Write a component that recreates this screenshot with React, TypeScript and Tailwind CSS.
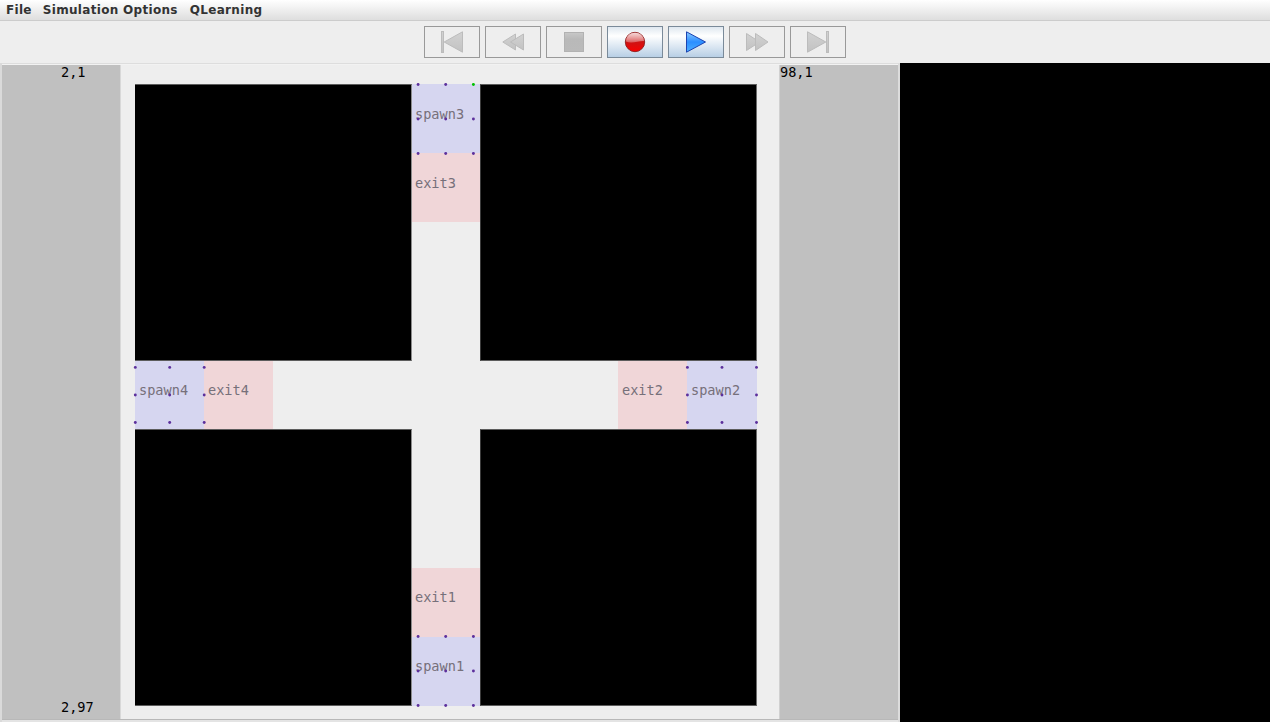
import React from 'react';

type Kind = 'start' | 'rewind' | 'stop' | 'record' | 'play' | 'forward' | 'end';
const kinds: Kind[] = ['start', 'rewind', 'stop', 'record', 'play', 'forward', 'end'];

function Icon({ kind }: { kind: Kind }) {
  const gray = { fill: 'url(#gray)', stroke: '#bcbcbc', strokeWidth: 1 };
  return (
    <svg width="54" height="30" viewBox="0 0 54 30" className="block">
      {kind === 'start' && (
        <g {...gray}>
          <rect x="16.500" y="4.500" width="2" height="21" />
          <path d="M37.500 4.800V25.200L19.200 15Z" />
        </g>
      )}
      {kind === 'rewind' && (
        <g {...gray}>
          <path d="M29.500 7V23L16.800 15Z" />
          <path d="M37.500 7V23L24.500 15Z" />
        </g>
      )}
      {kind === 'stop' && <rect x="17.500" y="5.500" width="19" height="19" fill="url(#stop)" stroke="#b2b2b2" />}
      {kind === 'record' && (
        <g>
          <circle cx="27" cy="15" r="9.700" fill="url(#red)" stroke="#8c1c1c" strokeWidth="0.900" />
          <path d="M18 14.500C18.200 9 22 5.800 27 5.800s8.800 3.200 9 8.200C31 13.500 24 17 18 14.500Z" fill="url(#shine)" />
        </g>
      )}
      {kind === 'play' && <path d="M17.500 4.800V25.200L36.500 15Z" fill="url(#blue)" stroke="#1c43b0" />}
      {kind === 'forward' && (
        <g {...gray}>
          <path d="M16.500 6.500V23.500L29.500 15Z" />
          <path d="M25.500 6.500V23.500L38 15Z" />
        </g>
      )}
      {kind === 'end' && (
        <g {...gray}>
          <rect x="35.500" y="4.500" width="2" height="21" />
          <path d="M16.500 4.800V25.200L34.800 15Z" />
        </g>
      )}
    </svg>
  );
}

function Gradients() {
  return (
    <svg width="0" height="0" className="absolute">
      <defs>
        <linearGradient id="gray" x2="0" y2="1">
          <stop stopColor="#d2d2d2" />
          <stop offset="1" stopColor="#c2c2c2" />
        </linearGradient>
        <linearGradient id="stop" x2="0" y2="1">
          <stop stopColor="#c8c8c8" />
          <stop offset="0.350" stopColor="#b9b9b9" />
          <stop offset="1" stopColor="#bababa" />
        </linearGradient>
        <linearGradient id="red" x2="0" y2="1">
          <stop stopColor="#d86060" />
          <stop offset="0.500" stopColor="#cc1414" />
          <stop offset="1" stopColor="#f80000" />
        </linearGradient>
        <linearGradient id="shine" x2="0" y2="1">
          <stop stopColor="#fff" stopOpacity="0.750" />
          <stop offset="1" stopColor="#fff" stopOpacity="0.300" />
        </linearGradient>
        <linearGradient id="blue" x2="0" y2="1">
          <stop stopColor="#8ccaff" />
          <stop offset="0.500" stopColor="#2c8eff" />
          <stop offset="1" stopColor="#4cb0ff" />
        </linearGradient>
      </defs>
    </svg>
  );
}

function Zone({ name, className }: { name: string; className: string }) {
  const color = name.startsWith('spawn') ? 'bg-[#d6d6f0]' : 'bg-[#f0d6d8]';
  return <div className={`h-[69px] shrink-0 text-[#76707a] ${color} ${className}`}>{name}</div>;
}

const dots: [number, number][] = [
  ...[84.5, 119, 153.5, 636.5, 671, 705.5].flatMap((y) => [418.1, 445.7, 473.4].map((x): [number, number] => [x, y])),
  ...[135.3, 169.7, 204.2, 687.4, 722, 756.5].flatMap((x) => [367.4, 395, 422.5].map((y): [number, number] => [x, y])),
];

function Block({ className }: { className: string }) {
  return <div className={`bg-black border-y border-y-[#5c5c5c] ${className}`} />;
}

function Simulation() {
  return (
    <div className="relative ml-[14px] mt-[19px] grid h-[622px] w-[622px] grid-cols-[277px_68px_277px] grid-rows-[277px_68px_277px]">
      <Block className="border-r border-r-[#8c8c8c]" />
      <div className="flex flex-col">
        <Zone name="spawn3" className="w-[68px] pl-[3px] pt-[22px]" />
        <Zone name="exit3" className="w-[68px] pl-[3px] pt-[22px]" />
      </div>
      <Block className="border-x border-l-[#3c3c3c] border-r-[#6c6c6c]" />
      <div className="flex overflow-hidden">
        <Zone name="spawn4" className="w-[69px] pl-[4px] pt-[21px]" />
        <Zone name="exit4" className="w-[69px] pl-[4px] pt-[21px]" />
      </div>
      <div />
      <div className="flex justify-end overflow-hidden">
        <Zone name="exit2" className="w-[69px] pl-[4px] pt-[21px]" />
        <Zone name="spawn2" className="w-[70px] pl-[4px] pt-[21px]" />
      </div>
      <Block className="border-r border-r-[#8c8c8c]" />
      <div className="flex flex-col justify-end">
        <Zone name="exit1" className="w-[68px] pl-[3px] pt-[21px]" />
        <Zone name="spawn1" className="w-[68px] pl-[3px] pt-[21px]" />
      </div>
      <Block className="border-x border-l-[#3c3c3c] border-r-[#6c6c6c]" />
      <svg className="absolute inset-0 overflow-visible" width="622" height="622" viewBox="135 84 622 622">
        {dots.map(([x, y], i) => (
          <circle key={i} cx={x} cy={y} r="1.450" fill={i === 2 ? '#00c000' : '#5c309c'} />
        ))}
      </svg>
    </div>
  );
}

export default function App() {
  return (
    <div className="flex h-[722px] w-[1270px] flex-col overflow-hidden bg-[#eeeeee] font-['DejaVu_Sans_Mono',monospace] text-[13.6px] leading-[16px] text-black">
      <Gradients />
      <nav className="flex h-[21px] shrink-0 gap-[12px] border-b border-[#cccccc] bg-linear-to-b from-white to-[#dedede] pl-[6px] pt-[3px] font-['DejaVu_Sans',sans-serif] text-[12px] font-bold leading-[15px] tracking-[0.31px] text-[#333333]">
        <span className="-mr-px">File</span>
        <span>Simulation Options</span>
        <span>QLearning</span>
      </nav>
      <div className="flex h-[42px] shrink-0 justify-center gap-[5px] pt-[5px]">
        {kinds.map((kind) => (
          <button
            key={kind}
            className={`h-[32px] w-[56px] border ${
              kind === 'record' || kind === 'play'
                ? 'border-[#7a8a99] bg-linear-to-b from-[#dfe8f0] via-white via-30% to-[#b8cfe5]'
                : 'border-[#999999]'
            }`}
          >
            <Icon kind={kind} />
          </button>
        ))}
      </div>
      <main className="flex min-h-0 flex-1">
        <div className="flex w-[900px] flex-col border-x-2 border-l-[#dadada] border-r-[#dcdcdc]">
          <div className="h-px shrink-0 bg-[#dddddd]" />
          <div className="h-px shrink-0 bg-[#f2f2f2]" />
          <div className="flex min-h-0 flex-1">
            <aside className="flex w-[119px] shrink-0 flex-col justify-between border-r border-[#d8d8d8] bg-[#c0c0c0] pb-[4px] pl-[59px]">
              <span className="-mt-px">2,1</span>
              <span>2,97</span>
            </aside>
            <section className="w-[658px] shrink-0 bg-[#eeeeee]">
              <Simulation />
            </section>
            <aside className="flex-1 border-l border-[#d0d0d0] bg-[#c0c0c0]">
              <div className="-mt-px">98,1</div>
            </aside>
          </div>
          <div className="h-px shrink-0 bg-[#b8b8b8]" />
          <div className="h-[2px] shrink-0 bg-[#e4e4e4]" />
        </div>
        <div className="flex-1 bg-black" />
      </main>
    </div>
  );
}
